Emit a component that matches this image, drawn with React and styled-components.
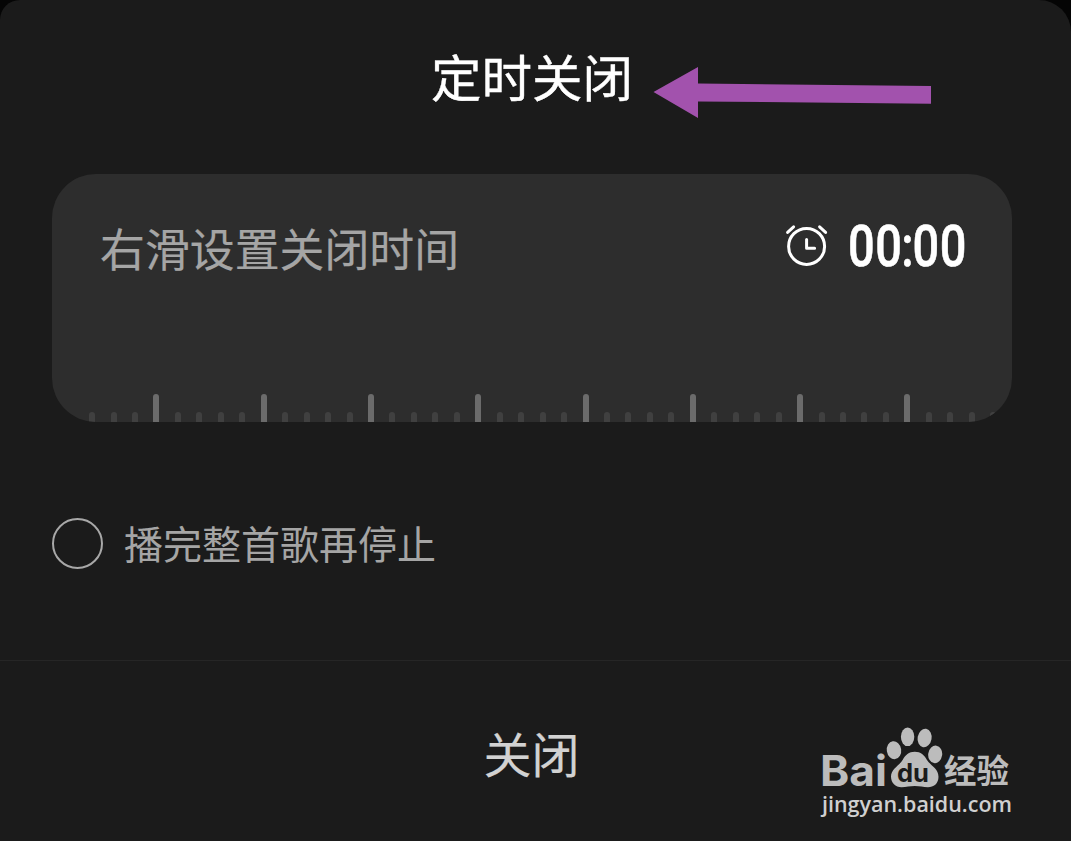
import { useState } from "react";
import styled, { createGlobalStyle } from "styled-components";

const ticks = Array.from({ length: 43 }, (_, i) => i);

export default function SleepTimer() {
  const [finishSong, setFinishSong] = useState(false);

  return (
    <>
      <GlobalStyle />
      <Sheet>
        <Title>定时关闭</Title>
        <Arrow viewBox="0 0 280 54">
          <path d="M1.5 27 46 2v16.6L279 21v17.7L46 36.4V53z" fill="#a252ad" />
        </Arrow>
        <TimerCard>
          <CardTop>
            <Hint>右滑设置关闭时间</Hint>
            <TimeBox>
              <AlarmIcon />
              <Time>
                <Digits>00</Digits>
                <Colon>:</Colon>
                <Digits>00</Digits>
              </Time>
            </TimeBox>
          </CardTop>
          <Ruler>
            {ticks.map((i) => (
              <TickCell key={i}>
                <Tick $major={i % 5 === 3} />
              </TickCell>
            ))}
          </Ruler>
        </TimerCard>
        <Option onClick={() => setFinishSong(!finishSong)}>
          <Radio $checked={finishSong} />
          <OptionText>播完整首歌再停止</OptionText>
        </Option>
        <CloseBtn>关闭</CloseBtn>
        <Watermark />
      </Sheet>
    </>
  );
}

function AlarmIcon() {
  return (
    <Clock viewBox="0 0 44 44">
      <circle cx="22.6" cy="24.4" r="18" />
      <path d="M22.6 17.5v8.8h8M3.6 10.4l6-5.6M35.6 4.8l6 5.6" />
    </Clock>
  );
}

function Watermark() {
  return (
    <Mark viewBox="0 0 204 102">
      <g fill="#bcbcbc">
        <LogoText x="6" y="66" fontSize="42.5" textLength="67" lengthAdjust="spacingAndGlyphs">
          Bai
        </LogoText>
        <ellipse cx="80" cy="30.2" rx="7.2" ry="9" transform="rotate(-8 80 30.2)" />
        <ellipse cx="93.6" cy="16.8" rx="6.7" ry="9.3" />
        <ellipse cx="110.6" cy="18" rx="7" ry="9.3" transform="rotate(10 110.6 18)" />
        <ellipse cx="121.2" cy="34.4" rx="7" ry="8.8" transform="rotate(8 121.2 34.4)" />
        <path d="M100.8 31.7c6 0 9.5 3.3 12 8 3.5 6 11.7 8.500 11.7 17 0 7-5 10.500-10.500 10.500-5 0-8-1.200-13.200-1.200S92.500 67.200 87.500 67.200C81.500 67.200 77 63 77 56.500c0-7.500 8.300-10.800 11.800-16.800 2.500-4.700 6-8 12-8z" />
        <LogoCn x="130" y="62.5" fontSize="33" textLength="65" lengthAdjust="spacingAndGlyphs">
          经验
        </LogoCn>
      </g>
      <LogoText x="83" y="61.5" fontSize="25" fill="#1b1b1b" textLength="32" lengthAdjust="spacingAndGlyphs">
        du
      </LogoText>
      <LogoUrl x="8" y="91.5" fontSize="22" fill="#d0d0d0" textLength="190" lengthAdjust="spacingAndGlyphs">
        jingyan.baidu.com
      </LogoUrl>
    </Mark>
  );
}

const GlobalStyle = createGlobalStyle`
  * {
    box-sizing: border-box;
  }
  body {
    margin: 0;
    background: #050505;
    font-family: "Noto Sans CJK SC", sans-serif;
  }
`;
const Sheet = styled.div`
  position: relative;
  width: 1071px;
  height: 841px;
  display: flex;
  flex-direction: column;
  background: #1b1b1b;
  border-radius: 20px 32px 0 0;
  overflow: hidden;
`;
const Title = styled.h1`
  margin: 37px 0 0 431px;
  height: 76px;
  line-height: 76px;
  font-size: 50.5px;
  font-weight: 400;
  color: #fff;
  -webkit-text-stroke: 0.4px #fff;
`;
const Arrow = styled.svg`
  position: absolute;
  left: 652px;
  top: 65px;
  width: 280px;
  height: 54px;
`;
const TimerCard = styled.div`
  width: 960px;
  height: 248px;
  margin: 61px 0 0 52px;
  display: flex;
  flex-direction: column;
  justify-content: space-between;
  background: #2d2d2d;
  border-radius: 44px;
  overflow: hidden;
`;
const CardTop = styled.div`
  display: flex;
  justify-content: space-between;
  padding: 40px 46px 0 48px;
`;
const Hint = styled.span`
  height: 68px;
  line-height: 68px;
  font-size: 44.9px;
  color: #a5a5a5;
  -webkit-text-stroke: 0.2px #a5a5a5;
`;
const TimeBox = styled.div`
  display: flex;
  align-items: center;
  height: 60px;
  gap: 20px;
`;
const Clock = styled.svg`
  width: 44px;
  height: 44px;
  fill: none;
  stroke: #fff;
  stroke-width: 3;
  stroke-linecap: round;
  stroke-linejoin: round;
`;
const Time = styled.div`
  display: flex;
  width: 118px;
  margin-top: 3px;
  font-family: Roboto, sans-serif;
  font-size: 58px;
  font-weight: 500;
  line-height: 58px;
  color: #fff;
  -webkit-text-stroke: 0.6px #fff;
  transform: scaleX(0.81);
  transform-origin: left;
`;
const Digits = styled.span`
  letter-spacing: 0.7px;
`;
const Colon = styled.span`
  margin: 0 -1.5px;
`;
const Ruler = styled.div`
  display: flex;
  align-items: flex-end;
  height: 28px;
  margin-left: 29.4px;
`;
const TickCell = styled.div`
  flex: 0 0 21.46px;
  display: flex;
  justify-content: center;
`;
const Tick = styled.i`
  width: 6px;
  height: ${({ $major }) => ($major ? 28 : 10)}px;
  border-radius: 3px 3px 0 0;
  background: ${({ $major }) => ($major ? "#6b6b6b" : "#404040")};
`;
const Option = styled.div`
  display: flex;
  align-items: center;
  height: 239px;
  padding: 4px 0 0 52px;
  gap: 21px;
  border-bottom: 1px solid #262626;
`;
const Radio = styled.span`
  width: 51px;
  height: 51px;
  border: 2px solid #a8a8a8;
  border-radius: 50%;
  background: ${({ $checked }) => ($checked ? "#a8a8a8" : "transparent")};
`;
const OptionText = styled.span`
  font-size: 39px;
  line-height: 58px;
  margin-bottom: 2px;
  color: #a5a5a5;
`;
const CloseBtn = styled.button`
  flex: 1;
  padding: 1px 8px 0 0;
  border: none;
  background: none;
  font-family: inherit;
  font-size: 48px;
  color: #d2d2d2;
  -webkit-text-stroke: 0.2px #d2d2d2;
`;
const Mark = styled.svg`
  position: absolute;
  left: 814px;
  top: 720px;
  width: 204px;
  height: 102px;
  overflow: visible;
`;
const LogoText = styled.text`
  font-family: Inter, sans-serif;
  font-weight: 700;
`;
const LogoCn = styled.text`
  font-family: "Noto Sans CJK SC", sans-serif;
  font-weight: 700;
`;
const LogoUrl = styled.text`
  font-family: "Open Sans", sans-serif;
  font-weight: 600;
`;
